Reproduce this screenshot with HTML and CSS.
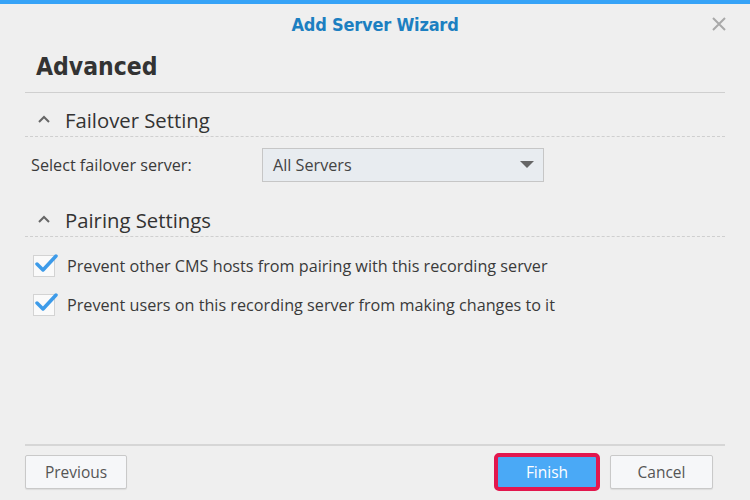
FILE: index.html
```html
<!DOCTYPE html>
<html>
<head>
<meta charset="utf-8">
<link rel="stylesheet" href="styles.css">
</head>
<body>
<div class="topbar"></div>
<div class="dialog">
  <div class="header">
    <span></span>
    <div class="title">Add Server Wizard</div>
    <svg class="close" width="16" height="16" viewBox="0 0 16 16"><path d="M2 2L14 14M14 2L2 14" stroke="#a9a9a9" stroke-width="2" fill="none"/></svg>
  </div>
  <div class="body">
    <h1 class="page-title">Advanced</h1>
    <div class="section">
      <div class="section-head">
        <svg class="chev" width="14" height="10" viewBox="0 0 14 10"><path d="M2 8L7 3L12 8" stroke="#666" stroke-width="2" fill="none"/></svg>
        <span>Failover Setting</span>
      </div>
      <div class="row">
        <label class="row-label">Select failover server:</label>
        <div class="select">
          <span>All Servers</span>
          <svg width="14" height="8" viewBox="0 0 14 8"><path d="M0 0H14L7 7Z" fill="#666"/></svg>
        </div>
      </div>
    </div>
    <div class="section">
      <div class="section-head">
        <svg class="chev" width="14" height="10" viewBox="0 0 14 10"><path d="M2 8L7 3L12 8" stroke="#666" stroke-width="2" fill="none"/></svg>
        <span>Pairing Settings</span>
      </div>
      <div class="checks">
        <div class="check">
          <span class="box"><svg width="24" height="20" viewBox="0 0 24 20"><path d="M3 11L9 17L22 3" stroke="#3d9be9" stroke-width="3.5" fill="none" stroke-linecap="round" stroke-linejoin="round"/></svg></span>
          <span>Prevent other CMS hosts from pairing with this recording server</span>
        </div>
        <div class="check">
          <span class="box"><svg width="24" height="20" viewBox="0 0 24 20"><path d="M3 11L9 17L22 3" stroke="#3d9be9" stroke-width="3.5" fill="none" stroke-linecap="round" stroke-linejoin="round"/></svg></span>
          <span>Prevent users on this recording server from making changes to it</span>
        </div>
      </div>
    </div>
  </div>
  <div class="footer">
    <button class="btn">Previous</button>
    <div class="right">
      <span class="highlight"><button class="btn primary">Finish</button></span>
      <button class="btn">Cancel</button>
    </div>
  </div>
</div>
</body>
</html>
```
FILE: styles.css
```css
html, body {
  margin: 0;
  padding: 0;
  background: #efefef;
  width: 750px;
  height: 500px;
  overflow: hidden;
  font-family: "Open Sans", "Liberation Sans", sans-serif;
  color: #3a3a3a;
}
.topbar {
  height: 4px;
  background: #36a3f7;
}
.dialog {
  height: 496px;
  display: flex;
  flex-direction: column;
}
.header {
  display: grid;
  grid-template-columns: 1fr auto 1fr;
  align-items: center;
  height: 40px;
}
.title {
  font-family: "DejaVu Sans Condensed", "DejaVu Sans", sans-serif;
  font-weight: bold;
  font-size: 18px;
  color: #1c7fc1;
  letter-spacing: -0.2px;
}
.close {
  justify-self: end;
  margin-right: 23px;
}
.body {
  flex: 1;
  padding: 0 25px;
}
.page-title {
  margin: 0;
  font-family: "DejaVu Sans Condensed", "DejaVu Sans", sans-serif;
  font-weight: bold;
  font-size: 24.5px;
  color: #333;
  padding: 8px 0 0 11px;
  height: 40px;
  line-height: 30px;
  border-bottom: 1px solid #cfcfcf;
}
.section-head {
  display: flex;
  align-items: center;
  gap: 14px;
  height: 44px;
  padding: 10px 0 0 12px;
  font-size: 20.3px;
  color: #333;
  border-bottom: 1px dashed #cfcfcf;
  box-sizing: border-box;
}
.chev { margin-top: -2px; }
.row {
  display: flex;
  align-items: center;
  height: 56px;
  padding: 0 0 0 6px;
  font-size: 16.2px;
  box-sizing: border-box;
}
.row-label { width: 231px; }
.select {
  width: 282px;
  height: 34px;
  box-sizing: border-box;
  border: 1px solid #c6c6c6;
  background: #e8ecf0;
  display: flex;
  align-items: center;
  justify-content: space-between;
  padding: 0 9px 0 10px;
  font-size: 16.2px;
  color: #444;
}
.checks {
  padding-top: 9px;
}
.check {
  display: flex;
  align-items: center;
  gap: 12px;
  height: 39px;
  padding-left: 8px;
  font-size: 16.2px;
  color: #3a3a3a;
}
.box {
  width: 20px;
  height: 20px;
  border: 1px solid #d3d3d3;
  background: #fafafa;
  position: relative;
  flex: none;
}
.box svg {
  position: absolute;
  left: 0;
  top: -3px;
}
.footer {
  margin: 0 25px;
  border-top: 2px solid #d6d6d6;
  height: 52px;
  display: flex;
  align-items: center;
  justify-content: space-between;
  padding-bottom: 2px;
}
.right {
  display: flex;
  align-items: center;
  gap: 10px;
  margin-right: 12px;
}
.btn {
  font-family: "Open Sans", "Liberation Sans", sans-serif;
  font-size: 15.5px;
  color: #555;
  width: 102px;
  height: 34px;
  background: #f6f7f9;
  border: 1px solid #c9c9c9;
  border-radius: 2px;
  box-shadow: 0 1px 1px rgba(0,0,0,0.08);
  padding: 0;
}
.right > .btn { width: 103px; }
.highlight {
  display: inline-flex;
  border: 3px solid #e2174e;
  border-radius: 5px;
  padding: 1px;
  background: #e2174e;
}
.btn.primary {
  background: #4aa9f6;
  border: none;
  color: #fff;
  width: 98px;
  height: 30px;
  border-radius: 1px;
  box-shadow: none;
}
```
